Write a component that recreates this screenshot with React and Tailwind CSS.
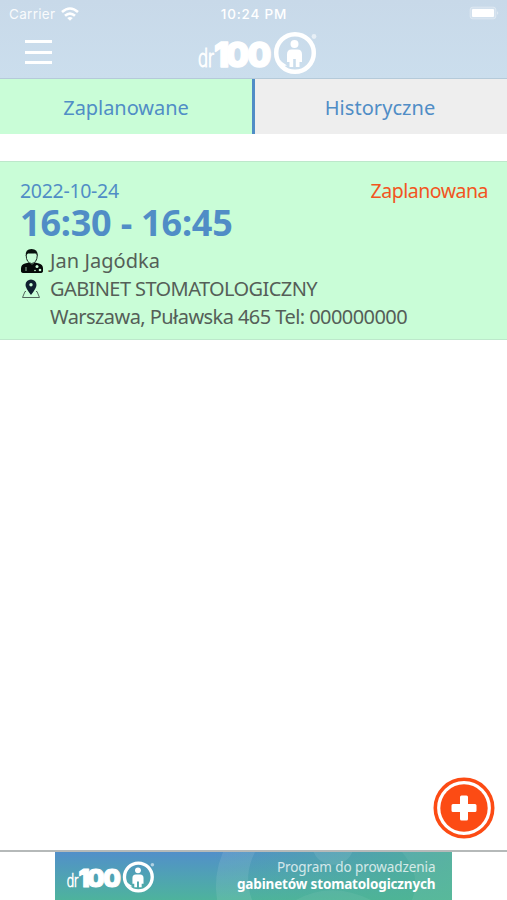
import React from 'react';

// dr100 logo, used in the header and in the banner
function Logo({ className }) {
  return (
    <svg viewBox="0 0 122 46" className={className} fill="white">
      <text y="36.500">
        <tspan x="1" fontFamily="Roboto" fontWeight="300" fontSize="25" stroke="white" strokeWidth="0.8" textLength="16" lengthAdjust="spacingAndGlyphs">dr</tspan>
        <tspan x="17 28.500 50.500" fontFamily="Inter" fontWeight="900" fontSize="33.500" stroke="white" strokeWidth="1.400" strokeLinejoin="round">100</tspan>
      </text>
      <circle cx="98" cy="23" r="18.800" fill="none" stroke="white" strokeWidth="4.500" />
      <path d="M83 30l2 2 5 3.500-6 1z" />
      <circle cx="97.500" cy="14" r="4" />
      <path d="M94.500 19.500h6q4.500 0 4.500 5V32h-2.500v5h-3.700v-8h-2.600v8h-3.700v-5H90v-7.500q0-5 4.500-5z" />
      <circle cx="117" cy="6.500" r="2.400" opacity="0.550" />
    </svg>
  );
}

function DoctorIcon() {
  return (
    <svg viewBox="0 0 24 26" className="h-[26px] w-6">
      <path d="M1 23v-2.500q0-4 4-5l4-1 3 2 3-2 4 1q4 1 4 5V23q0 2-3 2H4q-3 0-3-2z" fill="#050a08" />
      <path d="M6.200 7q0 8 5.500 8.500Q17 15 17.300 7l-1.500-2-4-1-4 1z" fill="#c9fdd7" stroke="#07110d" strokeWidth="0.900" />
      <path d="M5.800 8Q5 1 11.500 1T17.700 8l-1.500-3q-5 1-8.800 0z" fill="#07110d" />
      <circle cx="17" cy="18.500" r="1.500" fill="#c9fdd7" />
      <circle cx="20" cy="22" r="1.300" fill="#c9fdd7" />
      <circle cx="15" cy="22.500" r="0.800" fill="#c9fdd7" />
      <path d="M6 19v4" stroke="#c9fdd7" strokeWidth="0.700" />
    </svg>
  );
}

function PinIcon() {
  return (
    <svg viewBox="0 0 20 20" className="h-5 w-5">
      <path d="M5 12.500H4L1.500 18.500h17L16 12.500h-1" fill="none" stroke="#52665d" strokeWidth="1" />
      <path d="M10 16Q4.500 9 4.500 6a5.500 5.500 0 0 1 11 0q0 3-5.500 10z" fill="#102030" />
      <circle cx="10" cy="5.800" r="1.700" fill="#c9fdd7" />
    </svg>
  );
}

function StatusBar() {
  return (
    <div className="grid h-7 grid-cols-3 items-center pr-2 pl-[9px] font-['Inter',sans-serif] text-[13px] text-white">
      <div className="flex items-center gap-1.5">
        <span className="text-[13.500px] tracking-[0.300px] opacity-90">Carrier</span>
        <svg viewBox="0 0 18 14" className="mb-px h-3.5 w-[18px]" fill="none" stroke="white" strokeWidth="2.600">
          <path d="M1 5q8-7 16 0M4 8.800q5-4.500 10 0" />
          <path d="M6.200 11q2.800-2.200 5.600 0L9 13.800z" fill="white" stroke="none" />
        </svg>
      </div>
      <span className="pt-px text-center text-[13.500px] font-medium tracking-[0.800px]">10:24 PM</span>
      <svg viewBox="0 0 30 14" className="mb-0.5 h-3.5 w-[30px] justify-self-end">
        <rect x="1" y="1" width="26" height="12" rx="3" fill="white" fillOpacity="0.200" stroke="white" strokeOpacity="0.250" />
        <rect x="3" y="3" width="22" height="8" rx="1" fill="white" />
        <path d="M28 5v4l1.500-2z" fill="white" opacity="0.400" />
      </svg>
    </div>
  );
}

function Header() {
  return (
    <header className="h-[79px] border-b border-[#b5cad9] bg-linear-to-b from-[#c8d9e9] to-[#cbdeed]">
      <StatusBar />
      <div className="flex items-center pl-[25px]">
        <button className="mr-[145px] flex w-[27px] flex-col gap-[7.500px]" aria-label="Menu">
          <span className="h-[3px] w-full bg-white" />
          <span className="h-[3px] w-full bg-white" />
          <span className="h-[3px] w-full bg-white" />
        </button>
        <Logo className="mt-0.5 h-[46px] w-[122px]" />
      </div>
    </header>
  );
}

function Tabs() {
  return (
    <nav className="flex h-[55px] text-xl text-[#508dc6]">
      <button className="w-[255px] border-r-[3px] border-[#508dc6] bg-[#c9fdd7] pt-[3px]">
        <span className="tracking-[-0.050px]">Zaplanowane</span>
      </button>
      <button className="flex-1 bg-[#eeeeee] pt-[3px] pr-0.5">
        <span className="tracking-[0.050px]">Historyczne</span>
      </button>
    </nav>
  );
}

function Appointment() {
  return (
    <section className="mt-[27px] h-[179px] border-y border-[#bde8cb] bg-[#c9fdd7] pt-[15px] pr-[19px] pl-5 text-xl text-[#555f58]">
      <div className="flex h-7 items-center justify-between text-[19.500px]">
        <span className="tracking-[-0.300px] text-[#508dc6]">2022-10-24</span>
        <span className="tracking-[-0.480px] text-[#f2551f]">Zaplanowana</span>
      </div>
      <div className="flex h-[38px] items-center pb-0.5 text-[36px] font-bold text-[#508dc6]">
        <span className="tracking-[-0.200px]">16:30 - 16:45</span>
      </div>
      <div className="grid grid-cols-[24px_1fr] items-center gap-x-1.5 pt-1 leading-7">
        <DoctorIcon />
        <span className="tracking-[0.050px]">Jan Jagódka</span>
        <div className="flex justify-center pr-0.5"><PinIcon /></div>
        <span className="tracking-[-0.590px]">GABINET STOMATOLOGICZNY</span>
        <span className="col-start-2 tracking-[-0.560px]">Warszawa, Puławska 465 Tel: 000000000</span>
      </div>
    </section>
  );
}

function AddButton() {
  return (
    <button className="mr-3 mb-[11px] self-end" aria-label="Dodaj">
      <svg viewBox="0 0 62 62" className="h-[62px] w-[62px]">
        <circle cx="31" cy="31" r="28.700" fill="white" stroke="#fc4b14" strokeWidth="3.600" />
        <circle cx="31" cy="31" r="23.700" fill="#fc4b14" />
        <path d="M28.500 20h5v8.500H42v5h-8.500V42h-5v-8.500H20v-5h8.500z" fill="white" stroke="white" strokeWidth="3" strokeLinejoin="round" />
      </svg>
    </button>
  );
}

function Banner() {
  return (
    <footer className="flex h-[50px] justify-center border-t-2 border-[#b5b9b9] pr-px">
      <div className="relative flex w-[397px] items-center justify-between overflow-hidden bg-linear-to-b from-[#528fc9] to-[#4eb39c] pr-4 pl-2.5">
        <svg viewBox="0 0 397 49" preserveAspectRatio="none" className="absolute inset-0 h-full w-full">
          <defs>
            <linearGradient id="green" x1="0" x2="1">
              <stop offset="0.400" stopColor="#4eb592" stopOpacity="0" />
              <stop offset="1" stopColor="#4eb592" stopOpacity="0.800" />
            </linearGradient>
          </defs>
          <rect width="397" height="49" fill="url(#green)" />
          <path d="M168 0h32q-12 24-3 49h-35q-4-25 6-49z" fill="white" opacity="0.090" />
          <circle cx="278" cy="-8" r="21" fill="white" opacity="0.090" />
          <path d="M241 49q35-20 75 0zM347 0q20 24 10 49h40V0z" fill="white" opacity="0.060" />
        </svg>
        <Logo className="relative mt-0.5 h-[34px] w-[92px]" />
        <div className="relative text-right text-[13.500px] leading-[17px] text-white">
          <p className="tracking-[-0.080px] opacity-75">Program do prowadzenia</p>
          <p className="font-bold tracking-[-0.150px]">gabinetów stomatologicznych</p>
        </div>
      </div>
    </footer>
  );
}

function App() {
  return (
    <div className="flex h-[900px] w-[507px] flex-col overflow-hidden bg-white font-['Noto_Sans',sans-serif]">
      <Header />
      <Tabs />
      <Appointment />
      <main className="flex-1" />
      <AddButton />
      <Banner />
    </div>
  );
}

export default App;
